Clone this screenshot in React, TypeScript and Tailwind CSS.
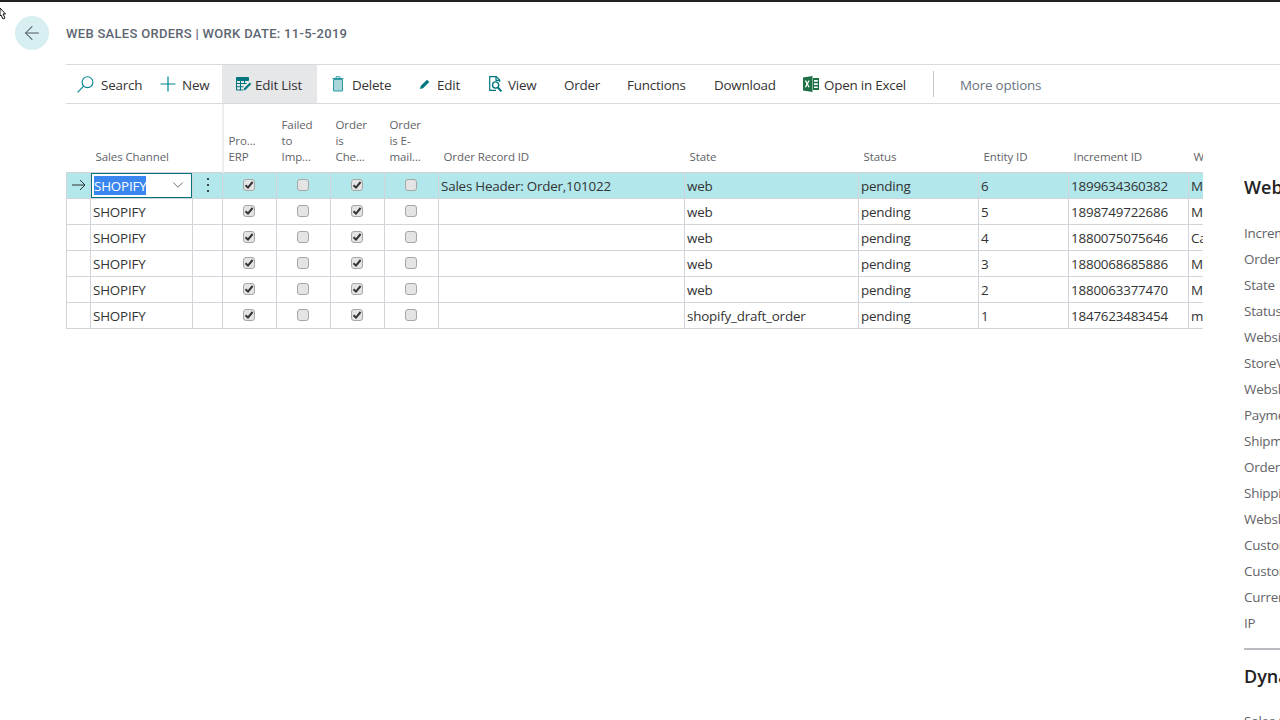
import { ArrowLeft, ChevronDown } from "lucide-react"

const font = { fontFamily: '"Open Sans", "Noto Sans", sans-serif' }

const rows = [
    { record: "Sales Header: Order,101022", state: "web", id: "6", inc: "1899634360382", w: "Magento" },
    { record: "", state: "web", id: "5", inc: "1898749722686", w: "Magento" },
    { record: "", state: "web", id: "4", inc: "1880075075646", w: "Cart" },
    { record: "", state: "web", id: "3", inc: "1880068685886", w: "Magento" },
    { record: "", state: "web", id: "2", inc: "1880063377470", w: "Magento" },
    { record: "", state: "shopify_draft_order", id: "1", inc: "1847623483454", w: "main" },
]

const fields = ["Increment", "Order", "State", "Status", "Website", "StoreView", "Webshop", "Payment", "Shipment", "Order", "Shipping", "Webshop", "Customer", "Customer", "Currency", "IP"]

function Check({ on }: { on: boolean }) {
    return (
        <span className="mx-auto flex h-[12px] w-[12px] items-center justify-center rounded-[3px] border border-[#a6a6a6] bg-[#e4e4e4]">
            {on && (
                <svg width="10" height="10" viewBox="0 0 10 10">
                    <path d="M1.5 5.2 L4 7.6 L8.6 2" fill="none" stroke="#333" strokeWidth="2" />
                </svg>
            )}
        </span>
    )
}

function SearchIcon() {
    return (
        <svg width="17" height="17" viewBox="0 0 17 17" fill="none" stroke="#00838f" strokeWidth="1.1">
            <circle cx="10.5" cy="6.2" r="5.4" />
            <path d="M6.6 10.1L.6 16.4" />
        </svg>
    )
}

function PlusIcon() {
    return (
        <svg width="16" height="16" viewBox="0 0 16 16" fill="none" stroke="#00838f" strokeWidth="1.2">
            <path d="M8 .5v15M.5 8h15" />
        </svg>
    )
}

function EditListIcon() {
    return (
        <svg width="16" height="14" viewBox="0 0 16 14" fill="none" stroke="#00757f">
            <path d="M.5.5h12v3h-12z" fill="#00757f" />
            <path d="M.5 3.5v9.5h6.5M4.5 3.5V13M8.5 3.5v3.5M.5 6.5h10M.5 9.7h7" />
            <path d="M7 13.8l.7-2.4 6-6.2 1.9 1.8-6 6.2z" fill="#00757f" stroke="#fff" strokeWidth=".5" />
        </svg>
    )
}

function DeleteIcon() {
    return (
        <svg width="12" height="16" viewBox="0 0 12 16" fill="none" stroke="#2f9aa3">
            <path d="M1.5 3.5h9v11.5h-9z" fill="#a9d6d9" />
            <path d="M.5 2.5h11M4 2V.8h4V2" />
        </svg>
    )
}

function EditIcon() {
    return (
        <svg width="12" height="12" viewBox="0 0 12 12">
            <path d="M1 11l.7-3L8 1.7 10.3 4 4 10.3z" fill="#00757f" />
        </svg>
    )
}

function ViewIcon() {
    return (
        <svg width="15" height="17" viewBox="0 0 15 17" fill="none" stroke="#00757f" strokeWidth="1.2">
            <path d="M7 14.4H.7V.7h6.6l3.4 3.4v2" />
            <path d="M7 1v3.3h3.5" />
            <circle cx="6.6" cy="9" r="3.1" strokeWidth="1.4" />
            <path d="M8.8 11.4l3.6 4" strokeWidth="2" />
        </svg>
    )
}

function ExcelIcon() {
    return (
        <svg width="16" height="16" viewBox="0 0 16 16">
            <path d="M0 1.6L9.5 0v16L0 14.4z" fill="#1e7145" />
            <path d="M10 2h6v12h-6z" fill="#1e7145" />
            <path d="M11 4h3.8v1.7H11zM11 7.2h3.8v1.7H11zM11 10.4h3.8v1.7H11z" fill="#fff" />
            <path d="M1.8 4.6l1.6 3.3-1.7 3.4h1.5l1-2.2 1 2.2h1.6L5 7.9l1.7-3.3H5.2l-1 2.1-.9-2.1z" fill="#fff" />
        </svg>
    )
}

function Cmd({ icon, label, className }: { icon?: React.ReactNode; label: string; className?: string }) {
    return (
        <div className={`flex h-full items-center whitespace-nowrap text-[13.4px] tracking-[-0.2px] text-[#333] ${className ?? ""}`}>
            {icon}
            <span className="pt-[2px]">{label}</span>
        </div>
    )
}

export default function App() {
    const cell = "border border-[#d2d4d9] text-[13.4px] tracking-[-0.2px] text-[#333] whitespace-nowrap overflow-hidden"
    const text = `${cell} px-[2px] pt-[2px]`
    const box = `${cell} pl-[1px] pr-[3px]`
    const head = "align-bottom text-left text-[11.5px] tracking-[-0.1px] leading-[16px] text-[#5f6368] font-normal pl-[5px] pb-[7px]"

    return (
        <div className="relative h-[720px] w-[1280px] overflow-hidden bg-white" style={font}>
            <div className="h-[2px] bg-[#222]" />

            {/* mouse pointer */}
            <svg className="absolute left-0 top-[8px]" width="7" height="14" viewBox="0 0 7 14">
                <path d="M0 0l5.5 6H3l2 4-2 1-2-4-1 1z" fill="#fff" stroke="#111" />
            </svg>

            <div className="flex h-[62px] items-center pl-[15px]">
                <div className="flex h-[34px] w-[34px] items-center justify-center rounded-full bg-[#d7eff1]">
                    <ArrowLeft size={22} strokeWidth={1.1} color="#505c66" />
                </div>
                <div
                    className="ml-[17px] pt-[1px] text-[13px] font-medium tracking-[0.3px] text-[#5c6672]"
                    style={{ fontFamily: "Roboto, sans-serif" }}
                >
                    WEB SALES ORDERS | WORK DATE: 11-5-2019
                </div>
            </div>

            <div className="ml-[66px] flex h-[40px] items-center border-y border-[#d8dade]">
                <Cmd className="w-[94px] gap-[7px] pl-[11px]" icon={<SearchIcon />} label="Search" />
                <Cmd className="w-[62px] gap-[6px]" icon={<PlusIcon />} label="New" />
                <Cmd className="w-[95px] gap-[3px] bg-[#e6e7e9] pl-[14px]" icon={<EditListIcon />} label="Edit List" />
                <Cmd className="w-[87px] gap-[8px] pl-[15px]" icon={<DeleteIcon />} label="Delete" />
                <Cmd className="w-[83px] gap-[6px] pl-[15px]" icon={<EditIcon />} label="Edit" />
                <Cmd className="w-[77px] gap-[4px] pl-[2px]" icon={<ViewIcon />} label="View" />
                <Cmd className="w-[63px]" label="Order" />
                <Cmd className="w-[87px]" label="Functions" />
                <Cmd className="w-[89px]" label="Download" />
                <Cmd className="w-[130px] gap-[5px]" icon={<ExcelIcon />} label="Open in Excel" />
                <div className="h-[26px] w-px bg-[#c4c6cc]" />
                <Cmd className="ml-[26px] !text-[#6b7480]" label="More options" />
            </div>

            <div className="flex">
                <div className="ml-[66px] w-[1137px] shrink-0 overflow-hidden">
                    <table className="w-[1222px] table-fixed border-collapse">
                        <colgroup>
                            <col className="w-[24px]" />
                            <col className="w-[102px]" />
                            <col className="w-[30px]" />
                            <col className="w-[54px]" />
                            <col className="w-[54px]" />
                            <col className="w-[54px]" />
                            <col className="w-[54px]" />
                            <col className="w-[246px]" />
                            <col className="w-[174px]" />
                            <col className="w-[120px]" />
                            <col className="w-[90px]" />
                            <col className="w-[120px]" />
                            <col className="w-[100px]" />
                        </colgroup>
                        <thead>
                            <tr className="h-[68px]">
                                <th className={head} />
                                <th className={head} colSpan={2}>
                                    Sales Channel
                                </th>
                                <th className={`${head} border-l-2 border-[#eceef0]`}>
                                    Pro...
                                    <br />
                                    ERP
                                </th>
                                <th className={head}>
                                    Failed
                                    <br />
                                    to
                                    <br />
                                    Imp...
                                </th>
                                <th className={head}>
                                    Order
                                    <br />
                                    is
                                    <br />
                                    Che...
                                </th>
                                <th className={head}>
                                    Order
                                    <br />
                                    is E-
                                    <br />
                                    mail...
                                </th>
                                <th className={head}>Order Record ID</th>
                                <th className={head}>State</th>
                                <th className={head}>Status</th>
                                <th className={head}>Entity ID</th>
                                <th className={head}>Increment ID</th>
                                <th className={head}>Website</th>
                            </tr>
                        </thead>
                        <tbody>
                            {rows.map((r, i) => {
                                const active = i === 0
                                return (
                                    <tr key={r.id} className={`h-[26px] ${active ? "bg-[#b2e7eb]" : ""}`}>
                                        <td className={cell}>
                                            {active && (
                                                <svg className="mx-auto" width="16" height="12" viewBox="0 0 16 12" fill="none" stroke="#333">
                                                    <path d="M1 6h13M9 1l5 5-5 5" />
                                                </svg>
                                            )}
                                        </td>
                                        {active ? (
                                            <td className={cell}>
                                                <div className="flex h-[25px] items-center justify-between border border-[#00757f] bg-white pl-[2px]">
                                                    <span className="bg-[#3a86f0] pt-[1px] leading-[18px] text-white">SHOPIFY</span>
                                                    <ChevronDown size={18} strokeWidth={1} color="#444" className="mr-[4px]" />
                                                </div>
                                            </td>
                                        ) : (
                                            <td className={text}>SHOPIFY</td>
                                        )}
                                        <td className={cell}>
                                            {active && (
                                                <svg className="mx-auto" width="4" height="16" viewBox="0 0 4 16" fill="#222">
                                                    <circle cx="2" cy="2" r="1.1" />
                                                    <circle cx="2" cy="8" r="1.1" />
                                                    <circle cx="2" cy="14" r="1.1" />
                                                </svg>
                                            )}
                                        </td>
                                        <td className={box}>
                                            <Check on />
                                        </td>
                                        <td className={box}>
                                            <Check on={false} />
                                        </td>
                                        <td className={box}>
                                            <Check on />
                                        </td>
                                        <td className={box}>
                                            <Check on={false} />
                                        </td>
                                        <td className={text}>{r.record}</td>
                                        <td className={text}>{r.state}</td>
                                        <td className={text}>pending</td>
                                        <td className={text}>{r.id}</td>
                                        <td className={text}>{r.inc}</td>
                                        <td className={text}>{r.w}</td>
                                    </tr>
                                )
                            })}
                        </tbody>
                    </table>
                </div>

                <div className="ml-[41px] w-[36px] shrink-0 overflow-hidden whitespace-nowrap pt-[71px]">
                    <div className="text-[18px] font-semibold leading-[24px] text-[#222]">Webshop Order</div>
                    <div className="mt-[21px] flex flex-col">
                        {fields.map((f, i) => (
                            <div key={i} className="h-[26px] text-[13.4px] leading-[26px] tracking-[-0.2px] text-[#5f6368]">
                                {f}
                            </div>
                        ))}
                    </div>
                    <div className="mt-[12px] h-[2px] bg-[#b9bcc0]" />
                    <div className="mt-[14px] text-[18px] font-semibold leading-[24px] text-[#222]">Dynamics 365</div>
                    <div className="mt-[23px] text-[13.4px] tracking-[-0.2px] text-[#5f6368]">Sales Order</div>
                </div>
            </div>
        </div>
    )
}
